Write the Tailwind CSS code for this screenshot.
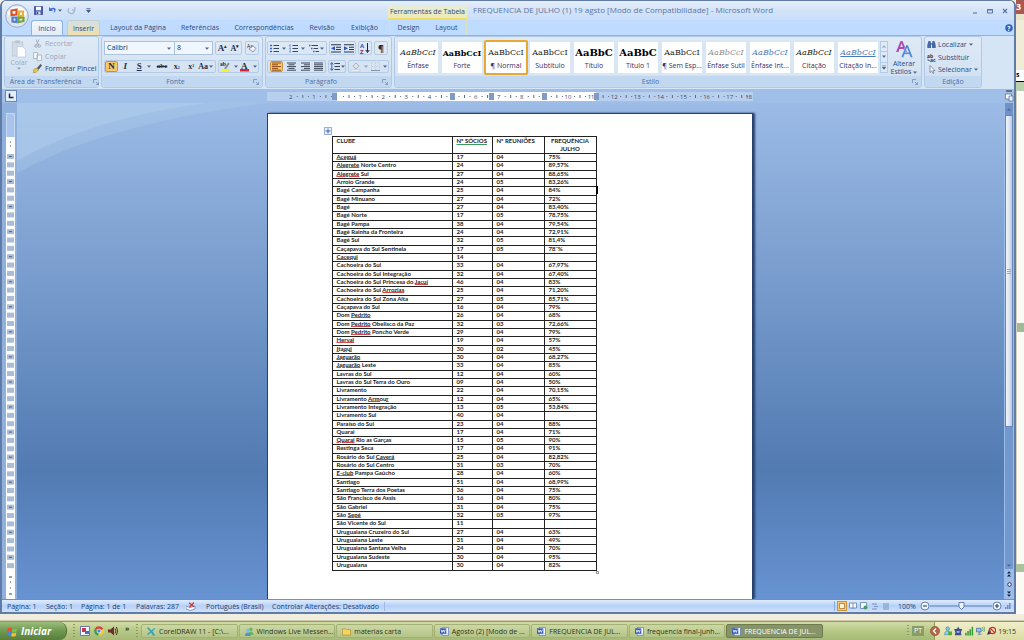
<!DOCTYPE html>
<html lang="pt-BR">
<head>
<meta charset="utf-8">
<title>FREQUENCIA DE JULHO (1) 19 agsto [Modo de Compatibilidade] - Microsoft Word</title>
<script src="https://cdn.jsdelivr.net/npm/@tailwindcss/browser@4"></script>
</head>
<body class="h-screen overflow-hidden flex flex-col bg-[#f4f2e6] font-['Open_Sans','Noto_Sans',sans-serif] text-[7px] leading-[9px] text-[#2c4a80]">

<svg class="hidden">
  <symbol id="down" viewBox="0 0 4 3"><path d="M0 .5h4L2 2.8z" fill="#4a6490"/></symbol>
  <symbol id="launch" viewBox="0 0 6 6"><path d="M.5 4V.5H4M3 3l2.5 2.5M5.500 3.200v2.300H3.200" fill="none" stroke="#7590b8" stroke-width=".8"/></symbol>
  <symbol id="word" viewBox="0 0 10 10"><path d="M2.500.5h7v9h-7z" fill="#f4f8ff" stroke="#4568b8" stroke-width=".7"/><path d="M4 7.500h5M4 9h4" stroke="#8aa6dd" stroke-width=".5"/><path d="M0 1.500h7v6H0z" fill="#3458b4"/><path d="M1.200 3l1 3L3.500 3.300 4.800 6l1-3" fill="none" stroke="#fff" stroke-width=".9"/></symbol>
</svg>

<div class="flex-1 min-h-0 flex">
  <!-- Word window -->
  <section class="flex-1 min-w-0 flex flex-col border-l-2 border-r-2 border-t border-b-2 border-[#5f7ba6] rounded-t-md bg-[#bfdbff] overflow-hidden">

    <!-- title bar -->
    <header class="relative h-[19px] shrink-0 flex bg-linear-to-b from-[#e6effb] via-[#d3e3f8] to-[#cadffb]">
      <div class="w-[386px] shrink-0 flex items-center gap-[5px] pl-[32px]">
        <button aria-label="Salvar" class="size-[9px]"><svg viewBox="0 0 9 9" class="size-full"><path d="M.5.500h8v8h-8z" fill="#4a58b8" stroke="#31408f" stroke-width=".7"/><path d="M2 .8h5v3.400H2z" fill="#fff"/><path d="M2.500 5.500h4v3h-4z" fill="#d8dff5"/><path d="M3 6h1.200v2H3z" fill="#31408f"/></svg></button>
        <button aria-label="Desfazer" class="flex items-center gap-px"><svg viewBox="0 0 9 9" class="size-[9px]"><path d="M1 1v4h4L3.700 3.700C5.500 2.300 7.300 3.800 5.500 7.500 9.500 4 7.500 0 2.600 2.500z" fill="#3f6bd0"/></svg><svg class="w-[4px] h-[3px]"><use href="#down"/></svg></button>
        <button aria-label="Refazer" class="size-[9px]"><svg viewBox="0 0 9 9" class="size-full"><path d="M2.200 2.500C.3 4 1 7.500 4 7.600S8 5 7 3.200M7.800 1v3H5" fill="none" stroke="#a9b9d3" stroke-width="1.400"/></svg></button>
        <button aria-label="Personalizar" class="pl-[5px]"><svg viewBox="0 0 5 5" class="size-[5px]"><path d="M.5.500h4M.5 2.200h4L2.500 4.500z" stroke="#304e80" stroke-width=".6" fill="#304e80"/></svg></button>
      </div>
      <div class="w-[79px] shrink-0 self-end h-[15px] pt-[2px] text-center whitespace-nowrap border-b-2 border-[#f0dc6a] bg-linear-to-b from-[#e6ecd8] to-[#ecebb8]">Ferramentas de Tabela</div>
      <h1 class="flex-1 pl-[6px] pt-[3px] text-[8px] leading-[12px] whitespace-nowrap text-[#5b76a4]">FREQUENCIA DE JULHO (1) 19 agsto [Modo de Compatibilidade] - Microsoft Word</h1>
      <div class="flex items-center gap-[9px] pr-[6px] text-[#4f6b99]">
        <button aria-label="Minimizar"><svg viewBox="0 0 6 6" class="size-[6px]"><path d="M1 5h4" stroke="#4f6b99" stroke-width="1.200"/></svg></button>
        <button aria-label="Restaurar"><svg viewBox="0 0 6 6" class="size-[6px]"><path d="M.5 1.500h5v3.500h-5zM.5 2h5" fill="none" stroke="#4f6b99" stroke-width=".9"/></svg></button>
        <button aria-label="Fechar"><svg viewBox="0 0 6 6" class="size-[6px]"><path d="M1 .8l4 4.400M5 .8L1 5.200" stroke="#4f6b99" stroke-width="1.100"/></svg></button>
      </div>
      <button aria-label="Botão Office" class="absolute z-10 left-[3px] top-[3px] size-[24px]">
        <svg viewBox="0 0 24 24" class="size-full"><circle cx="12" cy="12" r="11.300" fill="#dfe5ef" stroke="#8b9bb8" stroke-width=".8"/><path d="M2.500 11a9.500 8.500 0 0 1 19 0q-9 4-19 0" fill="#fafcff"/>
        <g fill="none" stroke-width="2.200"><path d="M6.500 6.500l5-1v5l-5 .5z" stroke="#d9532a"/><path d="M14 7.500h4v4.500h-4z" stroke="#e9b030"/><path d="M7.500 13.500h4v4.500l-4-.5z" stroke="#4f7fd0"/><path d="M13.500 13.500l5 .5v3l-5 1.200z" stroke="#6fa53a"/></g></svg>
      </button>
    </header>

    <!-- ribbon tabs -->
    <nav class="h-[15px] shrink-0 flex items-stretch pl-[29px] whitespace-nowrap bg-[#bfdbff]">
      <button class="w-[32px] rounded-t-[3px] border border-b-0 border-[#8db2e3] bg-linear-to-b from-[#f2f7fd] to-[#e1ecf8]">Início</button>
      <button class="ml-[4px] w-[33px] rounded-t-[3px] border border-b-0 border-[#c5cfc9] bg-linear-to-b from-[#d3dfe6] to-[#f0dfa8]">Inserir</button>
      <button class="w-[76px]">Layout da Página</button>
      <button class="w-[48px]">Referências</button>
      <button class="w-[80px]">Correspondências</button>
      <button class="w-[36px]">Revisão</button>
      <button class="w-[49px]">Exibição</button>
      <button class="w-[38px] border-l border-[#d9e3c0]">Design</button>
      <button class="w-[40px] border-r border-[#d9e3c0]">Layout</button>
      <button aria-label="Ajuda" class="ml-auto mr-[1px]"><svg viewBox="0 0 8 8" class="size-[8px]"><circle cx="4" cy="4" r="3.700" fill="#2f5fc0"/><text x="2.200" y="6.500" font-size="6.500" font-weight="bold" fill="#fff">?</text></svg></button>
    </nav>

    <!-- ribbon -->
    <div id="ribbon" class="h-[54px] shrink-0 flex gap-[2px] px-[2px] pb-px bg-[#d6e5f5] border-t border-[#8db2e3] whitespace-nowrap">
      <section class="w-[95px] flex flex-col border border-[#b0c9e6] rounded-[3px] bg-linear-to-b from-[#dfeaf6] to-[#cfdff0]">
        <div class="flex-1 flex pt-[2px]">
          <button class="w-[28px] flex flex-col items-center text-[#9fa9ba]">
            <svg viewBox="0 0 18 20" class="w-[18px] h-[19px]"><path d="M2 3h11v15H2z" fill="#d3dbe6" stroke="#b7c2d2" stroke-width=".7"/><path d="M5 1.500h5v3H5z" fill="#b9c3d2"/><path d="M7 8h5.500L16 11v8H7z" fill="#fcfdff" stroke="#b7c2d2" stroke-width=".7"/></svg>
            Colar<svg class="w-[4px] h-[3px] opacity-50"><use href="#down"/></svg>
          </button>
          <div class="flex flex-col justify-between items-start pb-[3px] text-[#9fa9ba]">
            <button class="flex items-center gap-[3px]"><svg viewBox="0 0 9 9" class="size-[9px]"><path d="M3 .5l2.500 5.500M6 .5L3.500 6" stroke="#a4aebd" fill="none"/><circle cx="3" cy="7" r="1.300" stroke="#a4aebd" fill="none"/><circle cx="6.200" cy="7" r="1.300" stroke="#a4aebd" fill="none"/></svg>Recortar</button>
            <button class="flex items-center gap-[3px]"><svg viewBox="0 0 9 9" class="size-[9px]"><path d="M.5.500h4v6h-4zM4 3h4.500v5.500H4z" fill="#f3f6fb" stroke="#a4aebd" stroke-width=".8"/></svg>Copiar</button>
            <button class="flex items-center gap-[3px] text-[#2c3f66]"><svg viewBox="0 0 9 9" class="size-[9px]"><path d="M1 5l3-1 1.500 2L3 8.500H0z" fill="#e8c34a" stroke="#a97f20" stroke-width=".5"/><path d="M4 4l3.500-4L9 1.500 5.500 5.800z" fill="#4a5568"/></svg>Formatar Pincel</button>
          </div>
        </div>
        <footer class="h-[11px] flex items-center justify-center gap-[12px] pl-[6px] rounded-b-[3px] bg-[#c1d8f0] text-[#4d6fa8]">Área de Transferência<button aria-label="Opções de área de transferência"><svg class="size-[6px]"><use href="#launch"/></svg></button></footer>
      </section>

      <section class="w-[162px] flex flex-col border border-[#b0c9e6] rounded-[3px] bg-linear-to-b from-[#dfeaf6] to-[#cfdff0]">
        <div class="flex-1 flex flex-col justify-between pt-[4px] pb-[3px] px-[2px] text-[#1f2d4a]">
          <div class="flex h-[14px]">
            <div class="w-[71px] flex items-center border border-[#abc1de] bg-[#f0f6fd]"><select aria-label="Fonte" class="appearance-none flex-1 min-w-0 h-[12px] leading-[12px] outline-none px-[2px]"><option>Calibri</option></select><svg class="w-[4px] h-[3px] mr-[3px]"><use href="#down"/></svg></div>
            <div class="w-[38px] flex items-center border border-l-0 border-[#abc1de] bg-[#f0f6fd]"><select aria-label="Tamanho da fonte" class="appearance-none flex-1 min-w-0 h-[12px] leading-[12px] outline-none px-[2px]"><option>8</option></select><svg class="w-[4px] h-[3px] mr-[3px]"><use href="#down"/></svg></div>
            <div class="ml-[2px] w-[27px] flex justify-around border border-[#b4cbe7] rounded-[2px] font-['Liberation_Serif',serif] font-bold">
              <button class="text-[9px]" aria-label="Aumentar fonte">A<sup class="text-[5px]">▴</sup></button><button class="text-[8px]" aria-label="Reduzir fonte">A<sup class="text-[5px]">▾</sup></button>
            </div>
            <button aria-label="Limpar formatação" class="ml-[3px] w-[14px] grid place-items-center border border-[#b4cbe7] rounded-[2px]"><svg viewBox="0 0 10 10" class="size-[10px]"><text x="0" y="5" font-size="5" fill="#223">Aa</text><path d="M2 6l4-3 3 2.500L6 9z" fill="#f4f6fb" stroke="#7d7fae" stroke-width=".8"/></svg></button>
          </div>
          <div class="flex h-[13px] gap-[2px] font-['Liberation_Serif',serif]">
            <div class="flex w-[112px] border border-[#b4cbe7] rounded-[2px] text-[9px] items-center">
              <button aria-label="Negrito" class="w-[13px] h-full bg-[#fcc767] border border-[#c99442] rounded-[2px] font-bold leading-none">N</button>
              <button aria-label="Itálico" class="w-[15px] font-bold italic">I</button>
              <button aria-label="Sublinhado" class="w-[22px] flex items-center justify-center gap-[5px]"><u class="font-bold">S</u><svg class="w-[4px] h-[3px]"><use href="#down"/></svg></button>
              <button aria-label="Tachado" class="w-[15px] text-[7px] font-bold line-through">abc</button>
              <button aria-label="Subscrito" class="w-[15px] text-[8px] font-bold">x<span class="text-[4px]">2</span></button>
              <button aria-label="Sobrescrito" class="w-[14px] text-[8px] font-bold">x<sup class="text-[4px]">2</sup></button>
              <button aria-label="Maiúsculas e minúsculas" class="w-[17px] flex items-center text-[8px] font-bold gap-px">Aa<svg class="w-[4px] h-[3px]"><use href="#down"/></svg></button>
            </div>
            <div class="flex w-[41px] border border-[#b4cbe7] rounded-[2px] items-center justify-around">
              <button aria-label="Realce" class="flex items-center gap-[3px]"><svg viewBox="0 0 11 11" class="size-[11px]"><path d="M1 8h9v2.500H1z" fill="#f7f12c"/><text x="0" y="5" font-size="5.500" fill="#223" font-weight="bold">ab</text><path d="M4 7.500l4-6 1.800 1.200L6 8z" fill="#8a8f9e"/></svg><svg class="w-[4px] h-[3px]"><use href="#down"/></svg></button>
              <button aria-label="Cor da fonte" class="flex items-center gap-[3px]"><svg viewBox="0 0 11 11" class="size-[11px]"><path d="M1 8h9v2.500H1z" fill="#dc2430"/><text x="2" y="7.500" font-size="9" fill="#234" font-weight="bold">A</text></svg><svg class="w-[4px] h-[3px]"><use href="#down"/></svg></button>
            </div>
          </div>
        </div>
        <footer class="h-[11px] flex items-center rounded-b-[3px] bg-[#c1d8f0] text-[#4d6fa8]"><span class="flex-1 text-center pr-[4px]">Fonte</span><button class="pr-[3px]" aria-label="Opções de fonte"><svg class="size-[6px]"><use href="#launch"/></svg></button></footer>
      </section>

      <section class="w-[127px] flex flex-col border border-[#b0c9e6] rounded-[3px] bg-linear-to-b from-[#dfeaf6] to-[#cfdff0]">
        <div class="flex-1 flex flex-col justify-between pt-[4px] pb-[3px] px-px">
          <div class="flex h-[14px] gap-[2px]">
            <div class="flex w-[60px] border border-[#b4cbe7] rounded-[2px] items-center justify-around">
              <button aria-label="Marcadores" class="flex items-center gap-[3px]"><svg viewBox="0 0 9 9" class="size-[9px]"><path d="M0 1.500h2M0 4.500h2M0 7.500h2" stroke="#3c66c0" stroke-width="1.500"/><path d="M3.500 1.500H9M3.500 4.500H9M3.500 7.500H9" stroke="#3c4658"/></svg><svg class="w-[4px] h-[3px]"><use href="#down"/></svg></button>
              <button aria-label="Numeração" class="flex items-center gap-[3px]"><svg viewBox="0 0 9 9" class="size-[9px]"><path d="M1 .5v2M1 3.500v2M1 6.500v2" stroke="#3c66c0"/><path d="M3.500 1.500H9M3.500 4.500H9M3.500 7.500H9" stroke="#3c4658"/></svg><svg class="w-[4px] h-[3px]"><use href="#down"/></svg></button>
              <button aria-label="Lista multinível" class="flex items-center gap-px"><svg viewBox="0 0 10 9" class="w-[10px] h-[9px]"><path d="M0 1.500h1.500M2 4.500h1.500M4 7.500h1.500" stroke="#3c66c0" stroke-width="1.300"/><path d="M2.500 1.500H9M4.500 4.500H9M6.500 7.500H10" stroke="#3c4658"/></svg><svg class="w-[4px] h-[3px]"><use href="#down"/></svg></button>
            </div>
            <div class="flex w-[27px] border border-[#b4cbe7] rounded-[2px] items-center justify-around">
              <button aria-label="Diminuir recuo"><svg viewBox="0 0 10 9" class="w-[10px] h-[9px]"><path d="M0 .8h10M5 3.200h5M5 5.500h5M0 8h10" stroke="#2d3646" stroke-width="1.100"/><path d="M4 2.200v4.200L0 4.300z" fill="#2c55b8"/></svg></button>
              <button aria-label="Aumentar recuo"><svg viewBox="0 0 10 9" class="w-[10px] h-[9px]"><path d="M0 .8h10M5 3.200h5M5 5.500h5M0 8h10" stroke="#2d3646" stroke-width="1.100"/><path d="M0 2.200v4.200l4-2.100z" fill="#2c55b8"/></svg></button>
            </div>
            <button aria-label="Classificar" class="w-[14px] grid place-items-center border border-[#b4cbe7] rounded-[2px]"><svg viewBox="0 0 10 12" class="w-[10px] h-[12px]"><text x="0" y="5.500" font-size="6" font-weight="bold" fill="#2c55b8">A</text><text x="0" y="11.500" font-size="6" font-weight="bold" fill="#8a2f5c">Z</text><path d="M7.500 1v8.500M5.800 8l1.700 2.500L9.200 8" stroke="#222" fill="none"/></svg></button>
            <button aria-label="Mostrar tudo" class="w-[14px] border border-[#b4cbe7] rounded-[2px] text-[9px] font-bold leading-none text-[#222c40]">¶</button>
          </div>
          <div class="flex h-[13px] gap-[2px]">
            <div class="flex w-[59px] border border-[#b4cbe7] rounded-[2px] items-center justify-around">
              <button aria-label="Alinhar à esquerda" class="h-full w-[13px] grid place-items-center bg-[#fcc767] border border-[#c99442] rounded-[2px]"><svg viewBox="0 0 9 9" class="size-[9px]"><path d="M0 1h9M0 2.800h6M0 4.600h9M0 6.400h6M0 8.200h9" stroke="#8a4a1c"/></svg></button>
              <button aria-label="Centralizar"><svg viewBox="0 0 9 9" class="size-[9px]"><path d="M0 1h9M1.500 2.800h6M0 4.600h9M1.500 6.400h6M0 8.200h9" stroke="#3c4658"/></svg></button>
              <button aria-label="Alinhar à direita"><svg viewBox="0 0 9 9" class="size-[9px]"><path d="M0 1h9M3 2.800h6M0 4.600h9M3 6.400h6M0 8.200h9" stroke="#3c4658"/></svg></button>
              <button aria-label="Justificar"><svg viewBox="0 0 9 9" class="size-[9px]"><path d="M0 1h9M0 2.800h9M0 4.600h9M0 6.400h9M0 8.200h9" stroke="#3c4658"/></svg></button>
            </div>
            <button aria-label="Espaçamento" class="w-[18px] flex items-center justify-center gap-px border border-[#b4cbe7] rounded-[2px]"><svg viewBox="0 0 10 9" class="w-[10px] h-[9px]"><path d="M1.800 1v7M.2 2.500L1.800.5l1.600 2M.2 6.500l1.600 2 1.600-2" fill="none" stroke="#2c55b8" stroke-width=".9"/><path d="M4.500 1.500H10M4.500 4.500H10M4.500 7.500H10" stroke="#3c4658"/></svg><svg class="w-[4px] h-[3px]"><use href="#down"/></svg></button>
            <div class="flex w-[41px] border border-[#b4cbe7] rounded-[2px] items-center justify-around">
              <button aria-label="Sombreamento" class="flex items-center gap-[3px]"><svg viewBox="0 0 10 10" class="size-[10px]"><path d="M2 4l3-3 3 3-3 3z" fill="#dfe5ee" stroke="#98a5b8" stroke-width=".8"/><path d="M0 8h9v1.600H0z" fill="#f8fafc" stroke="#a8b3c4" stroke-width=".4"/></svg><svg class="w-[4px] h-[3px] opacity-50"><use href="#down"/></svg></button>
              <button aria-label="Bordas" class="flex items-center gap-[3px]"><svg viewBox="0 0 9 9" class="size-[9px]"><path d="M.5.500h8v8M.5.500v8M4.500 1v7M1 4.500h7" fill="none" stroke="#b3bfd0" stroke-width=".6" stroke-dasharray="1 1"/><path d="M0 8.500h9" stroke="#8796ac"/></svg><svg class="w-[4px] h-[3px]"><use href="#down"/></svg></button>
            </div>
          </div>
        </div>
        <footer class="h-[11px] flex items-center rounded-b-[3px] bg-[#c1d8f0] text-[#4d6fa8]"><span class="flex-1 text-center pr-[6px]">Parágrafo</span><button class="pr-[3px]" aria-label="Opções de parágrafo"><svg class="size-[6px]"><use href="#launch"/></svg></button></footer>
      </section>

      <section class="w-[528px] flex flex-col border border-[#b0c9e6] rounded-[3px] bg-linear-to-b from-[#dfeaf6] to-[#cfdff0]">
        <div class="flex-1 flex pt-[3px] pl-px">
          <div id="gallery" class="flex h-[35px] text-[#3d2f5c]"></div>
          <div class="mt-px h-[32px] w-[8px] flex flex-col border border-[#b4cbe7] bg-[#dde9f7] divide-y divide-[#b4cbe7]">
            <button aria-label="Acima" class="flex-1 grid place-items-center"><svg class="w-[4px] h-[3px] rotate-180 opacity-50"><use href="#down"/></svg></button>
            <button aria-label="Abaixo" class="flex-1 grid place-items-center"><svg class="w-[4px] h-[3px]"><use href="#down"/></svg></button>
            <button aria-label="Mais estilos" class="flex-1 grid place-items-center"><svg viewBox="0 0 4 5" class="w-[4px] h-[5px]"><path d="M0 .5h4M0 2h4L2 4.500z" fill="#4a6490" stroke="#4a6490" stroke-width=".4"/></svg></button>
          </div>
          <button class="w-[32px] flex flex-col items-center leading-[8px] text-[#2c4a80]"><svg viewBox="0 0 18 18" class="size-[18px] mb-[2px]"><path d="M1 12L5.500 1h2L12 12h-2.500l-1-3h-4l-1 3zM5.200 7h2.700L6.500 3.500z" fill="#b04bb4"/><path d="M6 17.500L11 5h2l5 12.500h-2.500l-1.200-3.200h-4.700l-1.200 3.200zM10.300 12.300h3.400L12 8z" fill="#4a86d8" stroke="#f4f8ff" stroke-width=".4"/></svg>Alterar<span class="flex items-center gap-[2px]">Estilos<svg class="w-[4px] h-[3px]"><use href="#down"/></svg></span></button>
        </div>
        <footer class="h-[11px] flex items-center rounded-b-[3px] bg-[#c1d8f0] text-[#4d6fa8]"><span class="flex-1 text-center pr-[6px]">Estilo</span><button class="pr-[3px]" aria-label="Opções de estilo"><svg class="size-[6px]"><use href="#launch"/></svg></button></footer>
      </section>

      <section class="w-[58px] flex flex-col border border-[#b0c9e6] rounded-[3px] bg-linear-to-b from-[#dfeaf6] to-[#cfdff0]">
        <div class="flex-1 flex flex-col justify-between items-start pt-[3px] pb-[2px] pl-[2px]">
          <button class="flex items-center gap-[2px]"><svg viewBox="0 0 9 9" class="size-[9px]"><path d="M1.500 1h2l.5 3v4H.3V5zM7.500 1h-2L5 4v4h3.700V5z" fill="#4669a8"/><path d="M3.500 4h2" stroke="#2c4a80"/></svg>Localizar<svg class="w-[4px] h-[3px]"><use href="#down"/></svg></button>
          <button class="flex items-center gap-[2px]"><svg viewBox="0 0 9 9" class="size-[9px]"><text x="0" y="4.500" font-size="5" font-weight="bold" fill="#2d3646">ab</text><text x="3" y="8.700" font-size="5" font-weight="bold" fill="#2d3646">ac</text><path d="M1 5.500v2h2" fill="none" stroke="#3c66c0" stroke-width=".8"/></svg>Substituir</button>
          <button class="flex items-center gap-[2px]"><svg viewBox="0 0 9 9" class="size-[9px]"><path d="M3 .5v7l1.600-1.500L6 8.500l1-.5-1.200-2.400H8z" fill="#fff" stroke="#5a6d90" stroke-width=".7"/></svg>Selecionar<svg class="w-[4px] h-[3px]"><use href="#down"/></svg></button>
        </div>
        <footer class="h-[11px] flex items-center justify-center rounded-b-[3px] bg-[#c1d8f0] text-[#4d6fa8]">Edição</footer>
      </section>
    </div>

    <!-- horizontal ruler -->
    <div class="h-[14px] shrink-0 flex items-center bg-[#a0bfe8]">
      <button aria-label="Tabulação" class="ml-[3px] size-[12px] grid place-items-center border border-[#6787bd] bg-[#e4eefb]"><svg viewBox="0 0 6 6" class="size-[6px]"><path d="M1.500 .5v4H5.500" fill="none" stroke="#1d2b4a" stroke-width="1.500"/></svg></button>
      <div class="flex-1 flex justify-center pr-[2px]"><svg id="hruler" width="486" height="9" role="img" aria-label="Régua horizontal" class="block"></svg></div>
      <svg viewBox="0 0 10 12" class="w-[10px] h-[12px]"><path d="M2 1h6" stroke="#223" stroke-width="1.200"/><path d="M1.500 4h6v5h-6z" fill="#fff" stroke="#556c96" stroke-width=".7"/><path d="M5 6h4v5H5z" fill="#e8eefa" stroke="#556c96" stroke-width=".7"/></svg>
    </div>

    <!-- workspace -->
    <main class="flex-1 min-h-0 flex">
      <div class="w-[15px] shrink-0 bg-[#90b0de] pl-[4px] pt-[10px] overflow-hidden"><svg id="vruler" width="9" height="487" role="img" aria-label="Régua vertical" class="block"></svg></div>
      <div class="relative flex-1 min-w-0 overflow-hidden bg-linear-to-b from-[#9cbbe6] from-0% via-[#527bb2] via-[74%] to-[#6893d2] flex justify-center pr-[2px]">
        <svg class="absolute left-0 top-0 w-[270px] h-[85px]" viewBox="0 0 270 85" preserveAspectRatio="none"><path d="M0 0H190Q75 15 0 58z" fill="#b4d0ec" opacity=".6"/><path d="M190 0H250Q90 20 0 70V58Q75 15 190 0z" fill="#b4d0ec" opacity=".3"/></svg>
        <article class="relative mt-[10px] w-[486px] shrink-0 bg-white border border-[#2a4068] border-b-0 shadow-[2px_0_2px_#24406e] pt-[22px] pl-[64px] text-black">
          <div class="relative w-[264px]">
            <svg viewBox="0 0 8 8" class="absolute -left-[8px] -top-[9px] size-[8px]"><path d="M.5.500h7v7h-7z" fill="#e8f0fc" stroke="#6c8fc8" stroke-width=".7"/><path d="M4 1.500v5M1.500 4h5" stroke="#3558a8" stroke-width=".9"/></svg>
            <table class="w-full h-[435px] table-fixed border-collapse font-['Lato','Open_Sans',sans-serif] font-bold text-[6px] leading-[7px] text-[#1c1c1c] whitespace-nowrap">
              <colgroup><col class="w-[120px]"><col class="w-[40px]"><col class="w-[52px]"><col class="w-[52px]"></colgroup>
              <thead><tr class="h-[17px] align-top text-left">
                <th scope="col" class="border border-[#222] pl-[4px] font-bold">CLUBE</th>
                <th scope="col" class="border border-[#222] pl-[4px] font-bold"><span class="underline decoration-[#3c9a5a]">Nº SÓCIOS</span></th>
                <th scope="col" class="border border-[#222] pl-[4px] font-bold">Nº REUNIÕES</th>
                <th scope="col" class="border border-[#222] text-center font-bold leading-[8px]">FREQUÊNCIA<br>JULHO</th>
              </tr></thead>
              <tbody id="rows"></tbody>
            </table>
            <span class="absolute -right-[2px] top-[50px] w-[2px] h-[8px] bg-black"></span>
            <span class="absolute -right-[3px] -bottom-[3px] size-[3px] border border-[#999] bg-white"></span>
          </div>
        </article>
      </div>
      <!-- vertical scrollbar -->
      <div class="w-[10px] shrink-0 flex flex-col items-center bg-[#9cbcea] px-px">
        <button aria-label="Rolar para cima" class="h-[12px] w-full grid place-items-center bg-[#6f92c8]"><svg class="w-[4px] h-[3px] rotate-180"><use href="#down"/></svg></button>
        <div class="flex-1 w-full bg-[#7398ce]"><div class="h-[70%] w-full grid place-items-center border border-[#6684b4] bg-linear-to-r from-[#f0f4fb] via-[#dfe6f2] to-[#b9c9e4]"><svg viewBox="0 0 4 5" class="w-[4px] h-[5px]"><path d="M0 .5h4M0 2.500h4M0 4.500h4" stroke="#8a98b4" stroke-width=".8"/></svg></div></div>
        <button aria-label="Rolar para baixo" class="h-[8px] w-full grid place-items-center bg-[#7398ce]"><svg class="w-[4px] h-[3px]"><use href="#down"/></svg></button>
        <button aria-label="Página anterior" class="h-[10px]"><svg viewBox="0 0 4 6" class="w-[4px] h-[6px]"><path d="M0 2.500L2 .3l2 2.200zM0 5.500l2-2.200 2 2.200z" fill="#14203c"/></svg></button>
        <button aria-label="Selecionar objeto" class="h-[10px]"><svg viewBox="0 0 5 5" class="size-[5px]"><circle cx="2.500" cy="2.500" r="1.800" fill="#dfe9fa" stroke="#14203c" stroke-width=".8"/></svg></button>
        <button aria-label="Próxima página" class="h-[10px]"><svg viewBox="0 0 4 6" class="w-[4px] h-[6px]"><path d="M0 .5h4L2 2.700zM0 3.500h4L2 5.700z" fill="#14203c"/></svg></button>
      </div>
    </main>

    <!-- status bar -->
    <footer class="h-[13px] shrink-0 flex items-center pl-[5px] pr-[3px] whitespace-nowrap border-t border-[#6e8fc4] bg-linear-to-b from-[#e0ecfc] via-[#b5d0f7] to-[#d0e2fb] text-[#21406f]">
      <span class="w-[39px]">Página: 1</span><span class="w-[35px]">Seção: 1</span><span class="w-[55px]">Página: 1 de 1</span><span class="w-[50px]">Palavras: 287</span>
      <svg viewBox="0 0 10 9" class="w-[10px] h-[9px]"><path d="M0 4l4 1.500L9 4v3L4.500 8.500 0 7z" fill="#f3f7ff" stroke="#5a78b0" stroke-width=".7"/><path d="M3 .8l5 4M8 .5L3.500 5" stroke="#d8322c" stroke-width="1.300"/></svg>
      <span class="ml-[10px] w-[66px]">Português (Brasil)</span><span class="pr-[5px] border-r border-[#9dbbe6]">Controlar Alterações: Desativado</span>
      <div class="ml-auto flex items-center border-l border-[#8cadde] pl-[2px]">
        <button aria-label="Layout de impressão" class="size-[10px] grid place-items-center bg-[#fcc767] border border-[#c99442]"><svg viewBox="0 0 6 6" class="size-[6px]"><path d="M.5.500h5v5h-5z" fill="#fff6dc" stroke="#a5783a" stroke-width=".8"/></svg></button>
        <button aria-label="Leitura" class="w-[11px] grid place-items-center"><svg viewBox="0 0 8 8" class="size-[8px]"><path d="M.5 1h7v5h-7zM4 1v6" fill="#f4f8ff" stroke="#5f7fae" stroke-width=".8"/></svg></button>
        <button aria-label="Layout da Web" class="w-[11px] grid place-items-center"><svg viewBox="0 0 8 8" class="size-[8px]"><path d="M.5.500h6v6h-6z" fill="#f4f8ff" stroke="#5f7fae" stroke-width=".8"/><circle cx="5.500" cy="5.500" r="2" fill="#4c9a6a"/></svg></button>
        <button aria-label="Estrutura de tópicos" class="w-[11px] grid place-items-center"><svg viewBox="0 0 6 7" class="w-[6px] h-[7px]"><path d="M0 1h5M2 3.500h4M0 6h5" stroke="#7d93b8"/></svg></button>
        <button aria-label="Rascunho" class="w-[11px] grid place-items-center"><svg viewBox="0 0 6 7" class="w-[6px] h-[7px]"><path d="M0 1h6M0 3h6M0 5h6M0 7h6" stroke="#7d93b8"/></svg></button>
        <button class="ml-[7px] w-[22px] text-left">100%</button>
        <button aria-label="Menos zoom"><svg viewBox="0 0 10 10" class="size-[10px]"><circle cx="5" cy="5" r="4" fill="#eef4fd" stroke="#5876a8" stroke-width=".9"/><path d="M3 5h4" stroke="#345" stroke-width="1.100"/></svg></button>
        <div class="relative w-[62px] h-[10px] flex items-center"><input type="range" value="50" aria-label="Zoom" class="absolute inset-0 w-full h-full opacity-0"><svg viewBox="0 0 62 10" class="w-full h-[10px]"><path d="M0 5h62" stroke="#5876a8" stroke-width=".9"/><path d="M29 1.500h5v4.500L31.500 8.500 29 6z" fill="#eef4fd" stroke="#5876a8" stroke-width=".9"/></svg></div>
        <button aria-label="Mais zoom"><svg viewBox="0 0 10 10" class="size-[10px]"><circle cx="5" cy="5" r="4" fill="#eef4fd" stroke="#5876a8" stroke-width=".9"/><path d="M3 5h4M5 3v4" stroke="#345" stroke-width="1.100"/></svg></button>
        <svg viewBox="0 0 7 7" class="ml-[2px] size-[7px]"><path d="M5 1h1.500M3 3h1.500M5 3h1.500M1 5h1.500M3 5h1.500M5 5h1.500" stroke="#5876a8" stroke-width="1.300"/></svg>
      </div>
    </footer>
  </section>

  <!-- window behind -->
  <aside class="w-[8px] shrink-0 flex flex-col bg-[#fbfaf4] overflow-hidden">
    <div class="h-[14px] bg-[#a8584f] text-white font-bold text-[9px] leading-[14px]">3</div>
    <div class="h-[6px] bg-[#e9e5cc]"></div>
    <div class="h-[50px] bg-[#f1ecd8]"></div>
    <div class="h-[12px] bg-white text-black font-bold leading-[9px] border-b border-black">s</div>
    <div class="h-[9px] bg-[#b9cfae]"></div>
    <div class="flex-1 border-l border-[#d5d3c0] flex flex-col justify-center"><div class="h-[9px] bg-[#9fbb95]"></div></div>
    <div class="mb-[42px] h-[8px] bg-[#a9c39f]"></div>
  </aside>
</div>

<!-- gap of the window behind, above the taskbar -->
<div class="h-[7px] shrink-0 bg-[#f1eedf] border-b border-[#cfccae]"></div>

<!-- taskbar -->
<footer class="h-[19px] shrink-0 flex items-stretch whitespace-nowrap border-t border-[#8f9c60] bg-linear-to-b from-[#d2dda6] via-[#b6c786] to-[#a7b976] text-[#2c3414]">
  <button class="w-[67px] flex items-center gap-[3px] pl-[7px] rounded-r-lg bg-linear-to-b from-[#9dbd7d] via-[#6f9850] to-[#587f3c] border-r border-[#4f6e34] text-white font-bold italic text-[10px]">
    <svg viewBox="0 0 12 12" class="size-[11px]"><path d="M1 2.500q2.500-1.500 4.500 0L4.800 6Q3 4.800.3 6z" fill="#e8502c"/><path d="M6.200 2.800q2.300 1.300 4.800 0L10.300 6.500q-2.500 1.200-4.700 0z" fill="#7cc244"/><path d="M.2 7Q2.800 5.800 4.700 7L4 10.500Q2 9.300 0 10.500z" fill="#4a86e0"/><path d="M5.400 7.300q2.400 1.200 4.800 0l-.8 3.600q-2.400 1.200-4.700 0z" fill="#f4c430"/></svg>Iniciar</button>
  <div class="w-[74px] flex items-center pl-[5px]">
    <svg viewBox="0 0 4 14" class="w-[4px] h-[14px]"><path d="M2 0v14" stroke="#8b9a5e" stroke-width="2" stroke-dasharray="1 2"/></svg>
    <button aria-label="Outlook" class="ml-[4px]"><svg viewBox="0 0 10 10" class="size-[10px]"><path d="M.5.500h9v9h-9z" fill="#f3f5ff" stroke="#5560a8" stroke-width=".8"/><path d="M2 2h4v4H2z" fill="#c43c4c"/><path d="M5 5h4v3H5z" fill="#4a6cc8"/></svg></button>
    <button aria-label="Chrome" class="ml-[4px]"><svg viewBox="0 0 10 10" class="size-[10px]"><path d="M5 5L.9 2.500A4.700 4.700 0 0 1 9.300 3z" fill="#dc4034"/><path d="M5 5L.9 2.500A4.700 4.700 0 0 0 4.500 9.700z" fill="#3f9e4c"/><path d="M5 5l4.300-2A4.700 4.700 0 0 1 4.500 9.700z" fill="#f6c832"/><circle cx="5" cy="5" r="2" fill="#4a80e0" stroke="#fff" stroke-width=".7"/></svg></button>
    <button aria-label="Som" class="ml-[4px]"><svg viewBox="0 0 10 10" class="size-[10px]"><path d="M0 3.500h2.500L6 .5v9L2.500 6.500H0z" fill="#6a2f26"/><path d="M7 2.500q2 2.500 0 5M8.300 1q3 4 0 8" fill="none" stroke="#50352a"/></svg></button>
    <button class="ml-[7px] mb-[6px] font-bold">»</button>
    <svg viewBox="0 0 4 14" class="ml-auto mr-[2px] w-[4px] h-[14px]"><path d="M2 0v14" stroke="#8b9a5e" stroke-width="2" stroke-dasharray="1 2"/></svg>
  </div>
  <nav id="tasks" class="w-[682px] flex py-[2px] gap-px"></nav>
  <div class="ml-auto flex items-center gap-[2px] pr-[10px]"><svg viewBox="0 0 4 12" class="w-[4px] h-[12px]"><path d="M2 0v12" stroke="#8b9a5e" stroke-width="2" stroke-dasharray="1 2"/></svg><button class="w-[12px] text-center leading-[10px] bg-[#8a9c62] text-white">PT</button></div>
  <div class="w-[90px] flex items-center gap-[2px] border-l border-[#8f9c60] bg-linear-to-b from-[#f0eec8] to-[#dcdca4]">
    <button aria-label="Mostrar ícones" class="-ml-[5px]"><svg viewBox="0 0 10 10" class="size-[10px]"><circle cx="5" cy="5" r="4.600" fill="#b4684a" stroke="#8a4630" stroke-width=".6"/><path d="M6 2.500L3.500 5 6 7.500" fill="none" stroke="#fff" stroke-width="1.300"/></svg></button>
    <svg viewBox="0 0 9 10" class="ml-[2px] w-[9px] h-[10px]"><circle cx="4" cy="2.500" r="2" fill="#7cc8e8" stroke="#2f7fa8" stroke-width=".6"/><path d="M.5 9q0-4 3.500-4t3.500 4z" fill="#8ed4f0" stroke="#2f7fa8" stroke-width=".6"/><path d="M4.500 5.500H9V9.500H4.500z" fill="#55b030"/></svg>
    <svg viewBox="0 0 9 10" class="w-[9px] h-[10px]"><path d="M4.500 0l1.200 2.500L9 3 7.500 6l.5 3.500H1L1.500 6 0 3l3.300-.5z" fill="#3a4f8c"/><path d="M3 5h3v2H3z" fill="#a4b4dc"/></svg>
    <svg viewBox="0 0 10 10" class="size-[10px]"><path d="M1 10V7M3.300 10V5M5.600 10V3M8 10V.5" stroke="#2f9a34" stroke-width="1.600"/></svg>
    <svg viewBox="0 0 10 10" class="size-[10px]"><path d="M.5 2h5v4h-5zM2 8.500h4M3.500 6v2" fill="#9cc4ee" stroke="#3f6aa8" stroke-width=".8"/><path d="M7 1q1.500 2 0 4M8.500 0q2.300 3 0 6" fill="none" stroke="#3f9a58" stroke-width=".8"/></svg>
    <svg viewBox="0 0 10 10" class="size-[10px]"><path d="M0 9L3 1l1.500 7z" fill="#3a3a48"/><circle cx="6" cy="4.500" r="3.400" fill="none" stroke="#d02c2c" stroke-width="1.300"/><path d="M3.600 2l5 5" stroke="#d02c2c" stroke-width="1.200"/></svg>
    <time class="ml-auto pr-[8px]">19:15</time>
  </div>
</footer>

<template id="ico-corel"><svg viewBox="0 0 10 10" class="size-[9px] shrink-0"><path d="M1 0l4 4 3-3 1 1-3 3 3 4-2 1-2.500-4L1 9 0 8l3.500-3L0 1z" fill="#2fa3b4"/></svg></template>
<template id="ico-msn"><svg viewBox="0 0 10 10" class="size-[9px] shrink-0"><circle cx="6.500" cy="2.500" r="2" fill="#6cb85c"/><path d="M4 9q0-4 2.700-4T9.500 9z" fill="#6cb85c"/><circle cx="3.200" cy="3.800" r="2" fill="#7cc0e8"/><path d="M0 10q0-4 3.200-4T6.300 10z" fill="#4f92cc"/></svg></template>
<template id="ico-folder"><svg viewBox="0 0 10 9" class="size-[9px] shrink-0"><path d="M.5 1.500h3.500l1 1h4.500v6h-9z" fill="#f4d564" stroke="#a98a24" stroke-width=".7"/></svg></template>
<template id="ico-word"><svg class="size-[9px] shrink-0"><use href="#word"/></svg></template>

<script>
// Style gallery: name, sample text, sample classes
const styles = [
  ['Ênfase', 'AaBbCcI', 'italic text-[8px] text-[#222]'],
  ['Forte', 'AaBbCcI', 'font-bold text-[8px] text-black'],
  ['¶ Normal', 'AaBbCcI', 'text-[8px] text-[#222]'],
  ['Subtítulo', 'AaBbCcI', 'text-[8px] text-[#222]'],
  ['Título', 'AaBbC', 'font-bold text-[10px] text-black'],
  ['Título 1', 'AaBbC', 'font-bold text-[10px] text-black'],
  ['¶ Sem Esp...', 'AaBbCcI', 'text-[8px] text-[#222]'],
  ['Ênfase Sutil', 'AaBbCcI', 'italic text-[8px] text-[#8f8f8f]'],
  ['Ênfase Int...', 'AaBbCcI', 'italic text-[8px] text-[#4a7ab8]'],
  ['Citação', 'AaBbCcI', 'italic text-[8px] text-[#222]'],
  ['Citação In...', 'AaBbCcI', 'italic underline text-[8px] text-[#4a7ab8]'],
];
document.getElementById('gallery').innerHTML = styles.map(([name, sample, cls], i) =>
  `<button class="w-[44px] flex flex-col items-center justify-end pb-[2px] bg-white border-2 rounded-[2px] ${i === 2 ? 'border-[#e8a838]' : 'border-[#d9e6f4]'}">
     <span class="text-center leading-[14px] font-['DejaVu_Serif',serif] ${cls}">${sample}</span><span class="leading-[11px]">${name}</span></button>`).join('');

// Table data; *word* marks a spelling mistake underlined in red
const data = `*Aceguá*|17|04|75%
*Alegrete* Norte Centro|24|04|89,57%
*Alegrete* Sul|27|04|88,65%
Arroio Grande|24|05|83,26%
Bagé Campanha|25|04|84%
Bagé Minuano|27|04|72%
Bagé|27|04|83,40%
Bagé Norte|17|05|78,75%
Bagé Pampa|38|04|79,54%
Bagé Rainha da Fronteira|24|04|72,91%
Bagé Sul|32|05|81,4%
Caçapava do Sul Sentinela|17|05|78¨%
*Cacequi*|14||
Cachoeira do Sul|33|04|67,97%
Cachoeira do Sul Integração|32|04|67,40%
Cachoeira do Sul Princesa do *Jacuí*|46|04|83%
Cachoeira do Sul *Arrozias*|25|04|71,20%
Cachoeira do Sul Zona Alta|27|05|85,71%
Caçapava do Sul|16|04|79%
Dom *Pedrito*|26|04|68%
Dom *Pedrito* Obelisco da Paz|32|03|72,66%
Dom *Pedrito* Poncho Verde|29|04|79%
*Herval*|19|04|57%
*Itaqui*|30|02|45%
*Jaguarão*|30|04|68,27%
*Jaguarão* Leste|33|04|85%
Lavras do Sul|12|04|60%
Lavras do Sul Terra do Ouro|09|04|50%
Livramento|22|04|70,15%
Livramento *Armour*|12|04|65%
Livramento Integração|13|05|53,84%
Livramento Sul|40|04|
Paraíso do Sul|23|04|88%
Quarai|17|04|71%
*Quarai* Rio as Garças|15|05|90%
Restinga Seca|17|04|91%
Rosário do Sul *Caverá*|25|04|82,82%
Rosário do Sul Centro|31|03|70%
*E-club* Pampa Gaúcho|28|04|60%
Santiago|51|04|68,99%
Santiago Terra dos Poetas|36|04|75%
São Francisco de Assis|16|04|80%
São Gabriel|31|04|75%
São *Sepé*|32|05|97%
São Vicente do Sul|11||
Uruguaiana Cruzeiro do Sul|27|04|63%
Uruguaiana Leste|31|04|49%
Uruguaiana Santana Velha|24|04|70%
Uruguaiana Sudeste|30|04|95%
Uruguaiana|30|04|82%`;
document.getElementById('rows').innerHTML = data.split('\n').map(line =>
  '<tr>' + line.split('|').map(c =>
    `<td class="border border-[#222] pl-[4px] py-0 leading-[6px] align-top">${c.replace(/\*(.+?)\*/g, '<span class="underline decoration-1 underline-offset-0 decoration-[#d84848]">$1</span>')}</td>`).join('') + '</tr>').join('');

// Horizontal ruler: 1 cm is 23.1 units, zero at 70
let h = '<rect width="486" height="9" fill="#b9cfee"/><rect x="70" width="259" height="9" fill="#fff"/>';
for (let n = -2; n <= 18; n++) {
  const x = 70 + n * 23.1;
  if (n && n !== 5) h += `<text x="${n === 18 ? 485 : x}" y="7" font-size="6" text-anchor="${n === 18 ? 'end' : 'middle'}" fill="#3c4c70">${Math.abs(n)}</text>`;
  for (const f of [6, 11.5, 17]) if (x + f < 485) h += `<rect x="${x + f}" y="${f === 11.5 ? 3 : 4}" width="1" height="${f === 11.5 ? 3 : 1}" fill="#5a6a8c"/>`;
}
for (const x of [65, 183, 222, 275, 327]) h += `<rect x="${x}" y="1" width="5" height="7" fill="#7f9cc9"/>`;
document.getElementById('hruler').innerHTML = h;

// Vertical ruler: one grey row marker per table row
let v = '<rect x=".5" y=".5" width="8" height="24" fill="#a9c4ea" stroke="#c4d8f2"/><rect y="24" width="9" height="463" fill="#fff"/><path d="M4 29h1M4 33h1" stroke="#345"/>';
for (let i = 0; i < 50; i++) {
  const y = 41 + i * 8.35;
  v += `<rect x="1" y="${y}" width="7" height="5" fill="#a9bcd8"/>`;
  if (i % 3 === 0) v += `<rect x="3" y="${y + 2}" width="3" height="1" fill="#4c5f86"/>`;
}
v += '<path d="M3 464h3M4 469h1M4 475h1M3 481h3" stroke="#345"/>';
document.getElementById('vruler').innerHTML = v;

// Taskbar buttons: icon, caption
const tasks = [['corel', 'CorelDRAW 11 - [C:\\...'], ['msn', 'Windows Live Messen...'], ['folder', 'materias carta'],
  ['word', 'Agosto (2) [Modo de ...'], ['word', 'FREQUENCIA DE JUL...'], ['word', 'frequencia final-junh...'], ['word', 'FREQUENCIA DE JUL...']];
document.getElementById('tasks').innerHTML = tasks.map(([ico, t], i) =>
  `<button class="flex-1 min-w-0 flex items-center gap-[3px] pl-[5px] rounded-[2px] border ${i === 6 ? 'border-[#6f7b4a] bg-[#87946a] text-white' : 'border-[#a3b274] bg-linear-to-b from-[#ccd8a4] to-[#b4c488]'}">${document.getElementById('ico-' + ico).innerHTML}${t}</button>`).join('');
</script>
</body>
</html>
